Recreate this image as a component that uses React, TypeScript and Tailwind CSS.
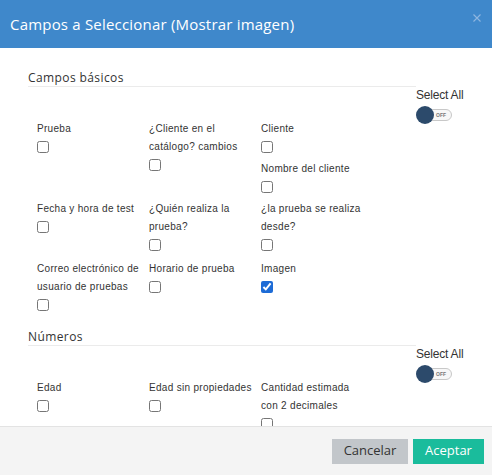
import React from "react";

type Field = { label: string; checked?: boolean };

const sans = { fontFamily: '"Open Sans", "Noto Sans", sans-serif' };

function FieldItem({ f }: { f: Field }) {
  return (
    <div className="w-[112px] pr-[4px]">
      <div className="text-[10px] leading-[18px] tracking-[0.3px] text-[#333]">{f.label}</div>
      <div className="h-[22px] pt-[3px]">
        <input
          type="checkbox"
          defaultChecked={f.checked}
          className="m-0 block h-[12px] w-[12px] accent-[#1d6bd6]"
        />
      </div>
    </div>
  );
}

function SelectAll() {
  return (
    <div className="w-[76px] shrink-0 pt-[18px]">
      <div className="text-[12px] leading-[14px] tracking-[-0.2px] text-[#333]">Select All</div>
      <div className="relative mt-[4px] h-[18px] w-[38px]">
        <div className="absolute left-[3px] top-[3px] flex h-[12px] w-[33px] items-center justify-end rounded-full border border-[#c8c8c8] bg-[#f7f7f7] pr-[5px]">
          <span className="text-[5px] font-bold leading-none text-[#777]">OFF</span>
        </div>
        <div className="absolute left-0 top-0 h-[18px] w-[18px] rounded-full bg-[#2c4a6b]" />
      </div>
    </div>
  );
}

function Section({ title, rows, last }: { title: string; rows: Field[][][]; last?: boolean }) {
  return (
    <div className={`flex ${last ? "" : "mb-[11px]"}`}>
      <div className="flex-1">
        <div
          className="h-[17px] border-b border-[#ebebeb] text-[12px] leading-[15px] tracking-[0.4px] text-[#333]"
          style={sans}
        >
          {title}
        </div>
        <div className="mt-[33px] pl-[9px]">
          {rows.map((row, i) => (
            <div key={i} className={`flex ${i === 1 ? "pb-[2px]" : ""}`}>
              {row.map((col, j) => (
                <div key={j} className="flex flex-col">
                  {col.map((f) => (
                    <FieldItem key={f.label} f={f} />
                  ))}
                </div>
              ))}
            </div>
          ))}
        </div>
      </div>
      <SelectAll />
    </div>
  );
}

export default function App() {
  const basic: Field[][][] = [
    [
      [{ label: "Prueba" }],
      [{ label: "¿Cliente en el catálogo? cambios" }],
      [{ label: "Cliente" }, { label: "Nombre del cliente" }],
    ],
    [
      [{ label: "Fecha y hora de test" }],
      [{ label: "¿Quién realiza la prueba?" }],
      [{ label: "¿la prueba se realiza desde?" }],
    ],
    [
      [{ label: "Correo electrónico de usuario de pruebas" }],
      [{ label: "Horario de prueba" }],
      [{ label: "Imagen", checked: true }],
    ],
  ];
  const numbers: Field[][][] = [
    [
      [{ label: "Edad" }],
      [{ label: "Edad sin propiedades" }],
      [{ label: "Cantidad estimada con 2 decimales" }],
    ],
  ];

  return (
    <div
      className="flex h-[475px] w-[492px] flex-col overflow-hidden bg-white"
      style={{ fontFamily: '"Liberation Sans", Arial, sans-serif' }}
    >
      <div className="flex h-[48px] shrink-0 items-center justify-between bg-[#3f88cb] pl-[10px] pr-[11px]">
        <h1 className="text-[15px] font-medium tracking-[0.2px] text-white" style={sans}>
          Campos a Seleccionar (Mostrar imagen)
        </h1>
        <svg width="8" height="8" viewBox="0 0 8 8" className="mb-[12px]">
          <path d="M0.5 0.5 L7.5 7.5 M7.5 0.5 L0.5 7.5" stroke="#8fb6e0" strokeWidth="1.1" />
        </svg>
      </div>

      <div className="min-h-0 flex-1 overflow-hidden pl-[28px] pt-[22px]">
        <Section title="Campos básicos" rows={basic} />
        <Section title="Números" rows={numbers} last />
      </div>

      <div
        className="flex h-[49px] shrink-0 items-center justify-end gap-[5px] border-t border-[#e3e3e3] bg-[#f4f4f4] pr-[8px]"
        style={sans}
      >
        <button className="h-[25px] w-[76px] bg-[#c2c6ca] text-[13px] text-[#333]">Cancelar</button>
        <button className="h-[25px] w-[71px] bg-[#1abc9c] text-[13px] text-white">Aceptar</button>
      </div>
    </div>
  );
}
